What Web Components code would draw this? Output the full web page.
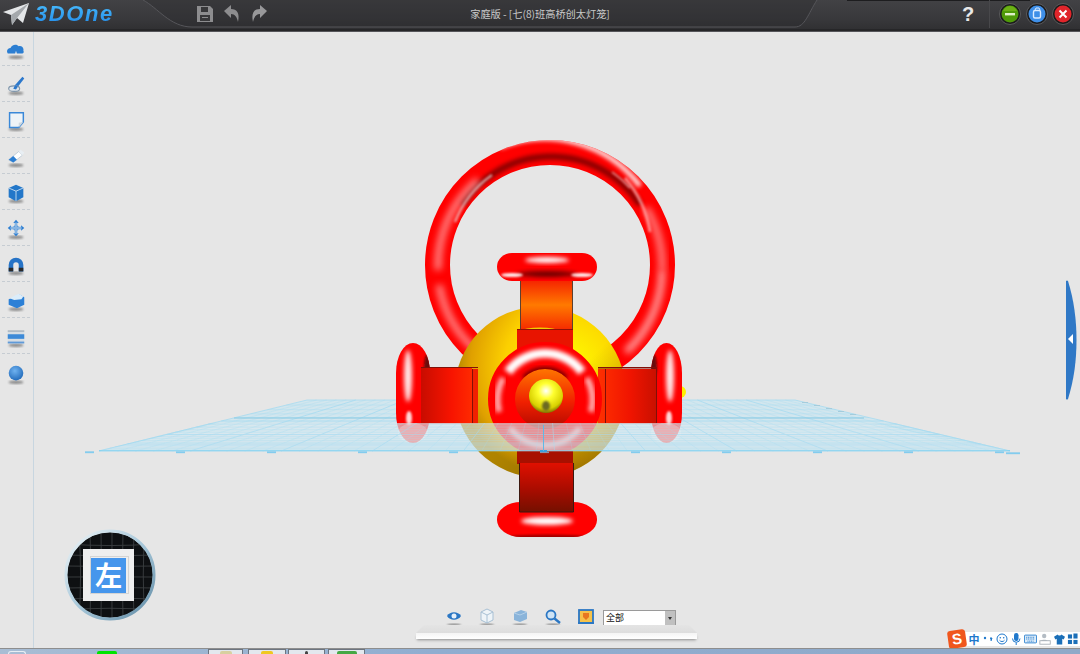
<!DOCTYPE html>
<html lang="zh">
<head>
<meta charset="utf-8">
<title>3D One</title>
<style>
  html, body { margin: 0; height: 100%; background: #e6e6e6; overflow: hidden; }
</style>
</head>
<body>
<app-window>
  <app-titlebar slot="top" title-text="家庭版 - [七(8)班高桥创太灯笼]"></app-titlebar>
  <tool-rail slot="rail">
    <rail-icon name="cloud"></rail-icon>
    <rail-icon name="brush"></rail-icon>
    <rail-icon name="sheet"></rail-icon>
    <rail-icon name="eraser"></rail-icon>
    <rail-icon name="cube"></rail-icon>
    <rail-icon name="move"></rail-icon>
    <rail-icon name="magnet"></rail-icon>
    <rail-icon name="box"></rail-icon>
    <rail-icon name="band"></rail-icon>
    <rail-icon name="ball"></rail-icon>
  </tool-rail>
  <scene-view slot="stage"></scene-view>
  <view-cube slot="stage" label="左"></view-cube>
  <view-toolbar slot="stage" value="全部"></view-toolbar>
  <side-flap slot="stage"></side-flap>
  <ime-bar slot="stage"></ime-bar>
  <task-strip slot="bottom"></task-strip>
</app-window>

<script>
const CJK = `"Noto Sans CJK SC", "Liberation Sans", sans-serif`;

class AppWindow extends HTMLElement {
  constructor() {
    super();
    this.attachShadow({ mode: 'open' });
    this.shadowRoot.innerHTML = `
      <style>
        :host { display: flex; flex-direction: column; width: 1080px; height: 654px; overflow: hidden; background: #e6e6e6; font-family: ${CJK}; }
        .main { flex: 1; display: flex; min-height: 0; }
        .stage { flex: 1; position: relative; overflow: hidden; }
      </style>
      <slot name="top"></slot>
      <div class="main">
        <slot name="rail"></slot>
        <div class="stage"><slot name="stage"></slot></div>
      </div>
      <slot name="bottom"></slot>
    `;
  }
}
customElements.define('app-window', AppWindow);

class AppTitlebar extends HTMLElement {
  constructor() {
    super();
    this.attachShadow({ mode: 'open' });
    this.shadowRoot.innerHTML = `
      <style>
        :host { display: block; position: relative; height: 32px; background: linear-gradient(#424245, #38383b 60%, #2e2e30); box-sizing: border-box; }
        .shape { position: absolute; left: 0; top: 0; }
        .row { position: relative; height: 28px; display: grid; grid-template-columns: 280px 1fr 280px; align-items: center; }
        .left { display: flex; align-items: center; padding-left: 3px; }
        .logo { display: flex; align-items: center; gap: 5px; width: 193px; }
        .word { font: italic 700 22px "Liberation Sans", sans-serif; letter-spacing: 1.6px; color: #2a9bf0; background: linear-gradient(#4cc0ff, #1f86e6); -webkit-background-clip: text; background-clip: text; -webkit-text-fill-color: transparent; line-height: 26px; }
        .tools { display: flex; gap: 9px; }
        .title { text-align: center; color: #c9c9c9; font-size: 10.2px; line-height: 26px; white-space: nowrap; }
        .right { display: flex; align-items: center; justify-content: flex-end; padding-right: 6px; }
        .help { font: 700 20px "Liberation Sans", sans-serif; color: #e8e8e8; width: 22px; text-align: center; margin-right: 10px; line-height: 26px; }
        .sep { width: 1px; height: 28px; background: #48484b; margin-right: 9px; }
        .btns { display: flex; gap: 4.5px; }
      </style>
      <svg class="shape" width="1080" height="32" viewBox="0 0 1080 32">
        <path d="M143 0C158 8 170 27 192 27H795C805 27 808 14 817 0Z" fill="#2a2a2c" opacity=".4"/>
        <path d="M143 0C158 8 170 27 192 27H795C805 27 808 14 817 0" fill="none" stroke="#56565a" stroke-width="1"/>
        <rect x="847" y="0" width="183" height="1" fill="#1d1d1f"/>
        <rect x="0" y="29" width="1080" height="2" fill="#262628"/>
        <rect x="0" y="31" width="1080" height="1" fill="#56565a"/>
      </svg>
      <div class="row">
        <div class="left">
          <div class="logo">
            <svg width="27" height="22" viewBox="0 0 27 22">
              <path d="M0 9L26 0 20 20 14 15 9 22 8 12Z" fill="#e4e6e8"/>
              <path d="M8 12L26 0 14 15 9 22Z" fill="#a4a8ac"/>
            </svg>
            <span class="word">3DOne</span>
          </div>
          <div class="tools">
            <svg width="18" height="18" viewBox="0 0 18 18"><path d="M1 1H14L17 4V17H1Z" fill="#8d8d8f"/><rect x="5" y="2" width="7" height="5" fill="#38383a"/><rect x="4" y="10" width="10" height="6" fill="#38383a"/><rect x="6" y="12" width="6" height="1" fill="#8d8d8f"/></svg>
            <svg width="18" height="18" viewBox="0 0 18 18"><path d="M1 6L8 0V4C14 4 17 8 15 17 14 12 12 9 8 9V13Z" fill="#8d8d8f"/></svg>
            <svg width="18" height="18" viewBox="0 0 18 18"><path d="M17 6L10 0V4C4 4 1 8 3 17 4 12 6 9 10 9V13Z" fill="#98989a"/></svg>
          </div>
        </div>
        <div class="title"></div>
        <div class="right">
          <span class="help">?</span>
          <span class="sep"></span>
          <div class="btns">
            <svg width="22" height="24" viewBox="0 0 22 24"><circle cx="11" cy="12" r="10.5" fill="#1b1b1c" stroke="#5a5a5c"/><circle cx="11" cy="12" r="8.5" fill="#4f9a08"/><path d="M11 4a8 8 0 0 1 7 5H4a8 8 0 0 1 7-5Z" fill="#80c020" opacity=".6"/><rect x="6" y="11" width="10" height="2.4" fill="#e0f0c8"/></svg>
            <svg width="22" height="24" viewBox="0 0 22 24"><circle cx="11" cy="12" r="10.5" fill="#1b1b1c" stroke="#5a5a5c"/><circle cx="11" cy="12" r="8.5" fill="#3f8fe8"/><rect x="7.5" y="8.5" width="7" height="7.5" rx="1.5" fill="none" stroke="#dcecff" stroke-width="1.4"/><path d="M9 8l1-2h3l1 2" fill="none" stroke="#dcecff"/></svg>
            <svg width="22" height="24" viewBox="0 0 22 24"><circle cx="11" cy="12" r="10.5" fill="#1b1b1c" stroke="#5a5a5c"/><circle cx="11" cy="12" r="8.5" fill="#e0252b"/><path d="M7.5 8.5l7 7M14.5 8.5l-7 7" stroke="#fff" stroke-width="2"/></svg>
          </div>
        </div>
      </div>
    `;
  }
  connectedCallback() {
    this.shadowRoot.querySelector('.title').textContent = this.getAttribute('title-text');
  }
}
customElements.define('app-titlebar', AppTitlebar);

class ToolRail extends HTMLElement {
  constructor() {
    super();
    this.attachShadow({ mode: 'open' });
    this.shadowRoot.innerHTML = `
      <style>
        :host { display: flex; flex-direction: column; width: 34px; box-sizing: border-box; border-right: 1px solid #c8d6e0; flex: none; background: #e6e6e6; }
      </style>
      <slot></slot>
    `;
  }
}
customElements.define('tool-rail', ToolRail);

const RAIL_ICONS = {
  cloud: `<path d="M3 17c-2-3 0-6 3-6 1-4 7-5 9-2 3-1 6 2 5 5 1 1 0 3-1 3h-6l-1-3-1 3Z" fill="#2c7ed2"/>`,
  brush: `<path d="M19 3l2 2-7 9-3-2Z" fill="#2c78cc"/><ellipse cx="10" cy="16" rx="6" ry="3" fill="#dfe6ec" stroke="#7d94aa" stroke-width="1.2"/><path d="M11 12l3 2-2 3-3-1Z" fill="#2c78cc"/>`,
  sheet: `<path d="M5 3H20V13L15 19H5Z" fill="#eef3f7" stroke="#3a88d8" stroke-width="1.6"/><path d="M20 13l-5 1v5Z" fill="#cfd8df"/>`,
  eraser: `<path d="M4 15L15 6l4 4-10 8Z" fill="#fff" stroke="#9db4c8" stroke-width=".6"/><path d="M4 15l5-4 4 4-4 3Z" fill="#2c7ed2"/><path d="M15 6l2-2 4 3-2 3Z" fill="#e8eef3"/>`,
  cube: `<path d="M12 3l8 3.5v10L12 21l-8-4.500v-10Z" fill="#2377c9"/><path d="M4 6.500l8 3.500 8-3.500M12 10v11" fill="none" stroke="#d8e8f5" stroke-width=".9"/>`,
  move: `<circle cx="12" cy="11" r="3" fill="#2c7ed2"/><path d="M12 2l3 3.500H9ZM12 20l3-3.500H9ZM3 11l3.500-3v6ZM21 11l-3.500-3v6Z" fill="#2c7ed2"/><rect x="10.500" y="5" width="3" height="12" fill="#86b4e2"/><rect x="6" y="9.500" width="12" height="3" fill="#86b4e2"/>`,
  magnet: `<path d="M4 19V12a8 8 0 0 1 16 0v7h-5v-7a3 3 0 0 0-6 0v7Z" fill="#2673c6"/><rect x="4" y="15" width="5" height="4" fill="#2a2a2a"/><rect x="15" y="15" width="5" height="4" fill="#2a2a2a"/>`,
  box: `<path d="M4 10l12-5 5 3v8l-8 4-9-4Z" fill="#2c80d6"/><path d="M5 9l10-5 5 3-2 3-8 1Z" fill="#dcedfa"/>`,
  band: `<rect x="3" y="5" width="18" height="14" fill="#d6dde3"/><rect x="3" y="9" width="18" height="5" fill="#3d8ad8"/><rect x="3" y="5" width="18" height="1" fill="#8a9aa8"/><rect x="3" y="17" width="18" height="2" fill="#5f9ad8"/>`,
  ball: `<circle cx="12" cy="11" r="8" fill="url(#b)"/>`,
};

class RailIcon extends HTMLElement {
  constructor() {
    super();
    this.attachShadow({ mode: 'open' });
  }
  connectedCallback() {
    const body = RAIL_ICONS[this.getAttribute('name')] || '';
    this.shadowRoot.innerHTML = `
      <style>
        :host { display: flex; height: 36px; box-sizing: border-box; margin: 0 3px 0 2px; align-items: flex-end; justify-content: center; padding-bottom: 5px; border-bottom: 1px dashed #c6ccd2; }
        :host(:first-child) { height: 34px; }
        :host(:last-child) { border-bottom: 0; }
        svg { display: block; filter: blur(.5px); }
      </style>
      <svg width="22" height="22" viewBox="0 0 24 24">
        <defs>
          <radialGradient id="b" cx=".42" cy=".35" r=".7"><stop offset="0" stop-color="#6fb2f0"/><stop offset="1" stop-color="#1f68b8"/></radialGradient>
          <filter id="s"><feGaussianBlur stdDeviation="1.2"/></filter>
        </defs>
        <ellipse cx="12" cy="21" rx="8" ry="1.800" fill="#8a8a8a" filter="url(#s)"/>
        ${body}
      </svg>
    `;
  }
}
customElements.define('rail-icon', RailIcon);

class SceneView extends HTMLElement {
  constructor() {
    super();
    this.attachShadow({ mode: 'open' });
    const grid = this.gridLines();
    this.shadowRoot.innerHTML = `
      <style>
        :host { display: block; position: absolute; inset: 0; }
        svg { display: block; }
      </style>
      <svg width="1046" height="616" viewBox="34 32 1046 616">
        <defs>
          <filter id="b1" x="-30%" y="-30%" width="160%" height="160%"><feGaussianBlur stdDeviation="1"/></filter>
          <filter id="b2" x="-40%" y="-40%" width="180%" height="180%"><feGaussianBlur stdDeviation="2.200"/></filter>
          <filter id="b3" x="-40%" y="-40%" width="180%" height="180%"><feGaussianBlur stdDeviation="3.500"/></filter>
          <radialGradient id="ball" gradientUnits="userSpaceOnUse" cx="566" cy="366" r="112">
            <stop offset="0" stop-color="#ffff00"/><stop offset=".55" stop-color="#fcd000"/><stop offset=".85" stop-color="#e0a000"/><stop offset="1" stop-color="#b08400"/>
          </radialGradient>
          <linearGradient id="ballLow" x1="0" y1="0" x2="1" y2="1">
            <stop offset=".55" stop-color="#806000" stop-opacity="0"/><stop offset="1" stop-color="#705800" stop-opacity=".8"/>
          </linearGradient>
          <linearGradient id="strapTop" x1="0" y1="0" x2="0" y2="1">
            <stop offset="0" stop-color="#f41800"/><stop offset=".5" stop-color="#ff7a00"/><stop offset="1" stop-color="#f42000"/>
          </linearGradient>
          <linearGradient id="strapBot" x1="0" y1="0" x2="0" y2="1">
            <stop offset="0" stop-color="#e01000"/><stop offset=".55" stop-color="#a80c00"/><stop offset="1" stop-color="#741000"/>
          </linearGradient>
          <linearGradient id="strapL" x1="0" y1="0" x2="1" y2="0">
            <stop offset="0" stop-color="#c80c00"/><stop offset=".6" stop-color="#f81400"/><stop offset="1" stop-color="#ff2a00"/>
          </linearGradient>
          <linearGradient id="strapR" x1="0" y1="0" x2="1" y2="0">
            <stop offset="0" stop-color="#ff3000"/><stop offset=".55" stop-color="#f01400"/><stop offset="1" stop-color="#c81000"/>
          </linearGradient>
          <linearGradient id="core" x1="0" y1="0" x2="0" y2="1">
            <stop offset="0" stop-color="#ff7800"/><stop offset=".55" stop-color="#f02000"/><stop offset="1" stop-color="#b00800"/>
          </linearGradient>
          <radialGradient id="mini" cx=".5" cy=".35" r=".65">
            <stop offset="0" stop-color="#ffffff"/><stop offset=".35" stop-color="#ffff30"/><stop offset=".8" stop-color="#d8d000"/><stop offset="1" stop-color="#807000"/>
          </radialGradient>
          <mask id="bigRing" maskUnits="userSpaceOnUse" x="400" y="120" width="300" height="300"><circle cx="550" cy="265" r="112.500" fill="none" stroke="#fff" stroke-width="25"/></mask>
          <mask id="frontRing" maskUnits="userSpaceOnUse" x="470" y="330" width="150" height="140"><circle cx="545" cy="399" r="43.500" fill="none" stroke="#fff" stroke-width="27"/></mask>
          <clipPath id="topPill"><rect x="497" y="253" width="100" height="28" rx="15" ry="14"/></clipPath>
          <clipPath id="lowPill"><rect x="497" y="502" width="100" height="35" rx="24" ry="17"/></clipPath>
          <clipPath id="torL"><rect x="396" y="343" width="34" height="100" rx="17" ry="30"/></clipPath>
          <clipPath id="torR"><rect x="651" y="343" width="31" height="100" rx="15.500" ry="30"/></clipPath>
          <clipPath id="frontBand"><rect x="0" y="423" width="1080" height="32"/></clipPath>
        </defs>

        <!-- back half of the work plane -->
        <path d="M307 400H795L1010 451H99Z" fill="#d2e6ee"/>
        ${grid}

        <!-- big ring -->
        <circle cx="550" cy="265" r="112.500" fill="none" stroke="#ff0000" stroke-width="25"/>
        <g mask="url(#bigRing)">
          <path d="M462 205A106 106 0 0 1 640 205" fill="none" stroke="#600000" stroke-width="6" opacity=".75" filter="url(#b2)"/>
          <path d="M455 222A104 104 0 0 1 492 175" fill="none" stroke="#e6c8c8" stroke-width="2.400" opacity=".75" filter="url(#b1)"/>
          <path d="M612 172A104 104 0 0 1 630 188" fill="none" stroke="#e6c8c8" stroke-width="2" opacity=".6" filter="url(#b1)"/>
          <path d="M500 147A120 120 0 0 1 640 186" fill="none" stroke="#ffffff" stroke-width="5" opacity=".9" filter="url(#b2)"/>
          <path d="M625 178A108 108 0 0 1 650 232" fill="none" stroke="#ffd0d0" stroke-width="3" opacity=".6" filter="url(#b1)"/>
          <path d="M438 270A112 112 0 0 1 478 180" fill="none" stroke="#ffb0b0" stroke-width="7" opacity=".75" filter="url(#b3)"/>
          <path d="M439 285A112 112 0 0 0 478 352" fill="none" stroke="#ffb0b0" stroke-width="7" opacity=".75" filter="url(#b3)"/>
          <path d="M662 270A112 112 0 0 1 626 352" fill="none" stroke="#ffb8b8" stroke-width="7" opacity=".85" filter="url(#b3)"/>
          <path d="M662 270A112 112 0 0 0 646 208" fill="none" stroke="#ffb0b0" stroke-width="7" opacity=".7" filter="url(#b3)"/>
        </g>

        <circle cx="680" cy="392" r="6" fill="#fff000"/>

        <!-- yellow sphere -->
        <circle cx="540" cy="392" r="85.500" fill="url(#ball)"/>
        <circle cx="540" cy="392" r="85.500" fill="url(#ballLow)"/>

        <!-- side tori -->
        <rect x="396" y="343" width="34" height="100" rx="17" ry="30" fill="#ff0000"/>
        <g clip-path="url(#torL)">
          <ellipse cx="428" cy="366" rx="4" ry="12" fill="#6a0808" filter="url(#b1)"/>
          <ellipse cx="408" cy="376" rx="4" ry="26" fill="#ffe8e8" filter="url(#b2)"/>
          <ellipse cx="409" cy="418" rx="3" ry="7" fill="#ffd8d8" filter="url(#b1)"/>
        </g>
        <rect x="651" y="343" width="31" height="100" rx="15.500" ry="30" fill="#ff0000"/>
        <g clip-path="url(#torR)">
          <ellipse cx="653" cy="366" rx="4" ry="12" fill="#6a0808" filter="url(#b1)"/>
          <ellipse cx="670" cy="376" rx="4" ry="26" fill="#ffe8e8" filter="url(#b2)"/>
          <ellipse cx="669" cy="418" rx="3" ry="7" fill="#ffd8d8" filter="url(#b1)"/>
        </g>

        <!-- side straps -->
        <rect x="421" y="367" width="51" height="56.500" fill="url(#strapL)"/>
        <rect x="472" y="369" width="6" height="54.500" fill="#f02000"/>
        <rect x="421" y="367" width="57" height="1" fill="#801008"/>
        <rect x="472" y="369" width="1" height="54" fill="#801008"/>
        <rect x="598" y="369" width="59" height="54.500" fill="url(#strapR)"/>
        <rect x="598" y="367" width="59" height="1.500" fill="#801008"/>
        <rect x="605" y="369" width="1" height="54" fill="#801008"/>
        <rect x="656" y="368" width="1" height="55" fill="#801008"/>

        <!-- top strap and pill -->
        <rect x="520" y="277" width="53" height="56" fill="url(#strapTop)"/>
        <path d="M520.500 277V333M572.500 277V333" stroke="#5c4030" stroke-width="1"/>
        <ellipse cx="540" cy="331" rx="18" ry="3.500" fill="#f0d000"/>
        <rect x="517" y="329" width="56" height="30" fill="#e81400"/>
        <rect x="517" y="329" width="56" height="1" fill="#901008"/>
        <rect x="497" y="253" width="100" height="28" rx="15" ry="14" fill="#ff0000"/>
        <g clip-path="url(#topPill)">
          <ellipse cx="547" cy="260" rx="22" ry="3" fill="#ffffff" filter="url(#b2)"/>
          <ellipse cx="547" cy="274" rx="30" ry="3" fill="#6c0000" filter="url(#b2)"/>
          <ellipse cx="512" cy="275" rx="11" ry="2" fill="#ffe8e8" filter="url(#b1)"/>
          <ellipse cx="582" cy="275" rx="11" ry="2" fill="#ffe8e8" filter="url(#b1)"/>
        </g>

        <!-- front ring -->
        <circle cx="545" cy="399" r="31" fill="url(#core)"/>
        <circle cx="545" cy="399" r="43.500" fill="none" stroke="#ff0000" stroke-width="27"/>
        <g mask="url(#frontRing)">
          <path d="M508 372A46 46 0 0 1 582 372" fill="none" stroke="#ffffff" stroke-width="9" filter="url(#b2)"/>
          <path d="M524 378A30 30 0 0 1 566 378" fill="none" stroke="#4a0000" stroke-width="5" opacity=".85" filter="url(#b2)"/>
          <path d="M499 412A47 47 0 0 1 503 378" fill="none" stroke="#ffc8c8" stroke-width="6" opacity=".9" filter="url(#b2)"/>
          <path d="M591 412A47 47 0 0 0 587 378" fill="none" stroke="#ffc8c8" stroke-width="6" opacity=".9" filter="url(#b2)"/>
          <path d="M510 428A44 44 0 0 0 580 428" fill="none" stroke="#ffc8c8" stroke-width="6" opacity=".85" filter="url(#b2)"/>
        </g>
        <circle cx="546" cy="396" r="17" fill="url(#mini)"/>
        <ellipse cx="546" cy="406" rx="4" ry="5" fill="#6c6a20" filter="url(#b1)"/>

        <!-- lower strap and pill -->
        <rect x="517" y="451" width="56" height="13" fill="#a81000"/>
        <rect x="497" y="502" width="100" height="35" rx="24" ry="17" fill="#ff0000"/>
        <g clip-path="url(#lowPill)">
          <ellipse cx="547" cy="521" rx="26" ry="4" fill="#ffffff" filter="url(#b2)"/>
          <ellipse cx="547" cy="537" rx="40" ry="2.500" fill="#a00000" filter="url(#b1)"/>
        </g>
        <rect x="519" y="463" width="55" height="49" fill="url(#strapBot)"/>
        <path d="M519.500 463V512H573.500V463" fill="none" stroke="#3c1810" stroke-width="1"/>

        <!-- front of the plane, over the model -->
        <path d="M222 423H868L1010 451H99Z" fill="#dbe9ef" opacity=".62"/>
        <ellipse cx="413" cy="433" rx="15" ry="10" fill="#f2f2f2" opacity=".3"/>
        <ellipse cx="666" cy="433" rx="15" ry="10" fill="#f2f2f2" opacity=".3"/>
        <g clip-path="url(#frontBand)" opacity=".7">${grid}</g>
        <rect x="540" y="450" width="7" height="2" fill="#3a9fe0"/>
        <line x1="543.500" y1="425" x2="543.500" y2="451" stroke="#60b8e6" stroke-width="1"/>
      </svg>
    `;
  }

  gridLines() {
    const pt = (u, v) => {
      const t = (1 - 1 / (1 + v * 1.1)) / (1 - 1 / 2.1);
      const y = 400 + 51 * t;
      const l = 307 + (99 - 307) * t;
      const r = 795 + (1010 - 795) * t;
      return [l + (r - l) * u, y];
    };
    let s = '';
    // cross lines, back to front
    for (let i = 0; i <= 20; i++) {
      const a = pt(0, i / 20), b = pt(1, i / 20);
      s += `<line x1="${a[0]}" y1="${a[1]}" x2="${b[0]}" y2="${b[1]}" stroke="#a6dbf0" stroke-width="${i % 5 ? .4 : .8}"/>`;
    }
    // lines running away from the viewer
    for (let i = 0; i <= 50; i++) {
      const a = pt(i / 50, 0), b = pt(i / 50, 1);
      s += `<line x1="${a[0]}" y1="${a[1]}" x2="${b[0]}" y2="${b[1]}" stroke="#a6dbf0" stroke-width="${i % 5 ? .35 : .8}"/>`;
    }
    s += `<line x1="234" y1="418" x2="864" y2="418" stroke="#88cae4" stroke-width="1"/>`;
    s += `<path d="M99 450.500H1010" stroke="#84d2f0" stroke-width="1"/>`;
    // ruler marks along the near edge
    for (let i = 0; i < 11; i++) {
      const x = 90 + 91 * i;
      s += `<rect x="${x - 5}" y="451.500" width="9" height="1.600" fill="#84ccee"/>`;
    }
    s += `<rect x="1006" y="452.500" width="14" height="1.600" fill="#84ccee"/>`;
    for (let i = 0; i < 5; i++) {
      s += `<rect x="${802 + i * 12}" y="${402 + i * 3}" width="6" height="1" fill="#a4ccdc"/>`;
    }
    return s;
  }
}
customElements.define('scene-view', SceneView);

class ViewCube extends HTMLElement {
  constructor() {
    super();
    this.attachShadow({ mode: 'open' });
    let lines = '';
    for (let i = 1; i < 8; i++) {
      const p = 4 + i * 11;
      lines += `<path d="M${p} 2Q${46 + (p - 46) * .9} 46 ${p} 90M2 ${p}Q46 ${46 + (p - 46) * .9} 90 ${p}" fill="none" stroke="#3c3f42" stroke-width=".9"/>`;
    }
    this.shadowRoot.innerHTML = `
      <style>
        :host { display: block; position: absolute; left: 30px; top: 497px; width: 92px; height: 92px; }
        svg { position: absolute; inset: 0; }
        .face { position: absolute; left: 19px; top: 20px; width: 51px; height: 52px; background: #eeeeee; display: flex; align-items: center; justify-content: center; box-sizing: border-box; }
        .face::before { content: ""; position: absolute; inset: 8px 6px 8px 8px; box-shadow: 0 0 0 1px #d4d4d4; }
        .tile { position: relative; width: 35px; height: 35px; background: #4696ec; color: #fff; font-size: 27px; line-height: 34px; text-align: center; font-weight: 700; }
      </style>
      <svg width="92" height="92" viewBox="0 0 92 92">
        <defs>
          <linearGradient id="rim" x1="0" y1="0" x2="1" y2="1"><stop offset="0" stop-color="#f0f6f8"/><stop offset=".5" stop-color="#a8c8da"/><stop offset="1" stop-color="#5f8aa4"/></linearGradient>
          <clipPath id="c"><circle cx="46" cy="46" r="43"/></clipPath>
        </defs>
        <circle cx="46" cy="46" r="43" fill="#0e1012"/>
        <g clip-path="url(#c)">${lines}</g>
        <circle cx="46" cy="46" r="44" fill="none" stroke="url(#rim)" stroke-width="3"/>
      </svg>
      <div class="face"><div class="tile"></div></div>
    `;
  }
  connectedCallback() {
    this.shadowRoot.querySelector('.tile').textContent = this.getAttribute('label');
  }
}
customElements.define('view-cube', ViewCube);

class ViewToolbar extends HTMLElement {
  constructor() {
    super();
    this.attachShadow({ mode: 'open' });
    const shadow = `<ellipse cx="10" cy="18" rx="7" ry="1.500" fill="#8a8a8a" filter="url(#s)"/>`;
    const defs = `<defs><filter id="s"><feGaussianBlur stdDeviation="1"/></filter></defs>`;
    this.shadowRoot.innerHTML = `
      <style>
        :host { display: block; position: absolute; left: 382px; top: 575px; width: 281px; height: 36px; }
        .row { display: flex; align-items: center; gap: 13px; padding-left: 28px; height: 20px; position: relative; }
        .pick { display: flex; width: 73px; height: 16px; margin-left: -6px; margin-top: 2px; box-sizing: border-box; border: 1px solid #9a9a9a; background: #fff; font-size: 9px; line-height: 14px; color: #111; }
        .val { flex: 1; padding-left: 2px; }
        .arrow { width: 10px; background: #c0c0c0; display: flex; align-items: center; justify-content: center; }
        .arrow i { border: 2px solid transparent; border-top: 3px solid #333; border-bottom: 0; }
        .top { height: 8px; margin-top: -2px; background: linear-gradient(#e4e4e4, #dddddd); clip-path: polygon(8px 0, calc(100% - 8px) 0, 100% 100%, 0 100%); }
        .lip { height: 6px; background: linear-gradient(#f4f4f4, #ffffff); box-shadow: 0 2px 3px -1px #8c8c8c; }
      </style>
      <div class="row">
        <svg width="20" height="20" viewBox="0 0 20 20">${defs}${shadow}<path d="M3 9C6 4 14 4 17 9 14 14 6 14 3 9Z" fill="#2b77c4"/><circle cx="10" cy="9" r="2.500" fill="#e6f0fa"/></svg>
        <svg width="20" height="20" viewBox="0 0 20 20">${defs}${shadow}<path d="M10 2l6 3v8l-6 3-6-3V5Z" fill="#eef4f8" stroke="#a8c0d4"/><path d="M4 5l6 3 6-3M10 8v8" fill="none" stroke="#a8c0d4"/></svg>
        <svg width="20" height="20" viewBox="0 0 20 20">${defs}${shadow}<path d="M4 6l7-3 6 2v7l-7 3-6-2Z" fill="#8ab4da"/><path d="M4 6l6 2 7-3" fill="none" stroke="#b4d0e8"/></svg>
        <svg width="20" height="20" viewBox="0 0 20 20">${defs}${shadow}<circle cx="8" cy="8" r="4.500" fill="#cfe4f5" stroke="#2b77c4" stroke-width="1.800"/><path d="M11.500 11.500L17 16" stroke="#2b77c4" stroke-width="2.400"/></svg>
        <svg width="20" height="20" viewBox="0 0 20 20"><rect x="3" y="3" width="14" height="13" fill="#f6c24a" stroke="#2b77c4" stroke-width="1.800"/><path d="M7 6h6v4l-3 3-3-3Z" fill="#e87820"/><rect x="2" y="15" width="16" height="2" fill="#2b77c4"/></svg>
        <div class="pick"><span class="val"></span><span class="arrow"><i></i></span></div>
      </div>
      <div class="top"></div>
      <div class="lip"></div>
    `;
  }
  connectedCallback() {
    this.shadowRoot.querySelector('.val').textContent = this.getAttribute('value');
  }
}
customElements.define('view-toolbar', ViewToolbar);

class SideFlap extends HTMLElement {
  constructor() {
    super();
    this.attachShadow({ mode: 'open' });
    this.shadowRoot.innerHTML = `
      <style>
        :host { display: block; position: absolute; right: 3px; top: 248px; width: 12px; height: 120px; }
      </style>
      <svg width="12" height="120" viewBox="0 0 12 120">
        <path d="M1 1Q2 0 3 1C9 20 11.500 40 11.500 60 11.500 80 9 100 3 119Q2 120 1 119Z" fill="#2f78c6"/>
        <path d="M3 59l5-5v10Z" fill="#fff"/>
      </svg>
    `;
  }
}
customElements.define('side-flap', SideFlap);

class ImeBar extends HTMLElement {
  constructor() {
    super();
    this.attachShadow({ mode: 'open' });
    this.shadowRoot.innerHTML = `
      <style>
        :host { display: flex; position: absolute; right: 0; bottom: 0; height: 18px; align-items: center; }
        .logo { width: 18px; height: 18px; background: #f0561d; border-radius: 3px; transform: rotate(-8deg); color: #fff; font: 700 15px/18px "Liberation Sans", sans-serif; text-align: center; margin-right: -1px; position: relative; }
        .strip { display: flex; align-items: center; height: 14px; background: #fff; width: 115px; box-sizing: border-box; padding-left: 3px; gap: 2px; }
        .zh { color: #1f78cc; font-size: 11px; font-weight: 700; width: 12px; line-height: 14px; text-align: center; }
        svg { display: block; flex: none; }
      </style>
      <div class="logo">S</div>
      <div class="strip">
        <span class="zh">中</span>
        <svg width="12" height="14" viewBox="0 0 12 14"><circle cx="3" cy="6" r="1.200" fill="#1f78cc"/><path d="M8 6h2l-1 3" fill="#1f78cc" stroke="#1f78cc"/></svg>
        <svg width="12" height="14" viewBox="0 0 12 14"><circle cx="6" cy="7" r="5" fill="none" stroke="#1f78cc"/><circle cx="4.300" cy="5.800" r=".8" fill="#1f78cc"/><circle cx="7.700" cy="5.800" r=".8" fill="#1f78cc"/><path d="M3.500 8.200a3 3 0 0 0 5 0" fill="none" stroke="#1f78cc"/></svg>
        <svg width="12" height="14" viewBox="0 0 12 14"><rect x="4" y="1" width="4.500" height="8" rx="2.200" fill="#1f78cc"/><path d="M2.500 6.500a3.700 3.700 0 0 0 7.500 0M6.200 10.500V13" fill="none" stroke="#1f78cc"/></svg>
        <svg width="13" height="14" viewBox="0 0 15 14"><rect x=".5" y="2.500" width="14" height="9" rx="1" fill="#dcebf8" stroke="#1f78cc"/><path d="M2.500 5h10M2.500 7h10M4 9.500h7" stroke="#1f78cc" stroke-dasharray="1.200 .8"/></svg>
        <svg width="13" height="14" viewBox="0 0 15 14"><circle cx="6" cy="3.500" r="2.500" fill="#b4bcc4"/><path d="M2 10c0-3 8-3 8 0Z" fill="#b4bcc4"/><rect x="1" y="9" width="12" height="4" fill="#fff" stroke="#a4acb4"/></svg>
        <svg width="11" height="14" viewBox="0 0 12 14"><path d="M4 2L0 4.500 1.500 7.500 3 6.800V13H9V6.800L10.500 7.500 12 4.500 8 2C7.500 3.500 4.500 3.500 4 2Z" fill="#1b6fb8"/></svg>
        <svg width="11" height="14" viewBox="0 0 12 14"><rect x="1" y="2" width="4.500" height="4.500" fill="#1b6fb8"/><rect x="7" y="1" width="4.500" height="5.500" fill="#1b6fb8"/><rect x="1" y="8" width="4.500" height="4.500" fill="#1b6fb8"/><rect x="7" y="8" width="4.500" height="4.500" fill="#1b6fb8"/></svg>
      </div>
    `;
  }
}
customElements.define('ime-bar', ImeBar);

class TaskStrip extends HTMLElement {
  constructor() {
    super();
    this.attachShadow({ mode: 'open' });
    this.shadowRoot.innerHTML = `
      <style>
        :host { display: flex; flex: none; height: 6px; box-sizing: border-box; border-top: 1px solid #8e8e8e; background: linear-gradient(90deg, #a8bdd4, #90add0 40%, #8fa9c8); align-items: flex-end; overflow: hidden; }
        .orb { width: 18px; height: 3px; margin-left: 8px; border: 1px solid #e8eef4; border-bottom: 0; border-radius: 9px 9px 0 0; box-sizing: border-box; }
        .green { width: 20px; height: 3px; margin-left: 71px; background: #00e400; border-radius: 2px 2px 0 0; }
        .win { height: 5px; margin-left: 5px; background: #e3e8ee; border: 1px solid #6d7580; border-bottom: 0; box-sizing: border-box; display: flex; align-items: flex-end; justify-content: center; }
        .win i { display: block; height: 3px; border-radius: 2px 2px 0 0; }
      </style>
      <span class="orb"></span>
      <span class="green"></span>
      <span class="win" style="width:35px;margin-left:91px"><i style="width:12px;background:#d8d0a0"></i></span>
      <span class="win" style="width:38px"><i style="width:12px;background:#f0c820"></i></span>
      <span class="win" style="width:37px;margin-left:2px"><i style="width:3px;background:#444"></i></span>
      <span class="win" style="width:37px;margin-left:3px"><i style="width:20px;background:#44a844"></i></span>
    `;
  }
}
customElements.define('task-strip', TaskStrip);
</script>
</body>
</html>
